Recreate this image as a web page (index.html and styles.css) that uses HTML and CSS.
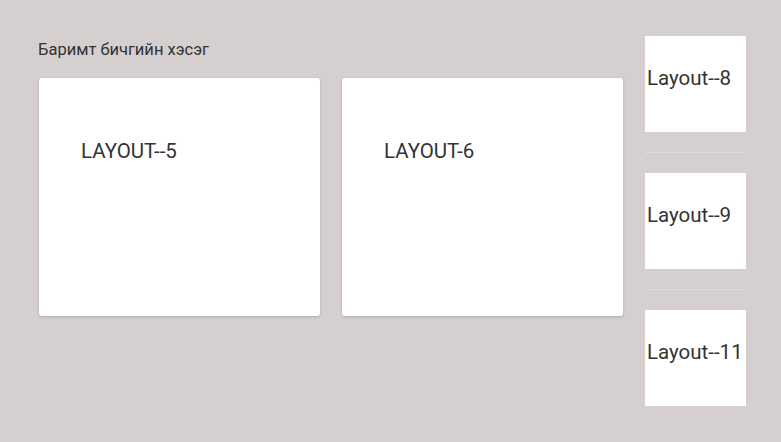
FILE: index.html
```html
<html lang="mn">
<head>
    <meta charset="UTF-8">
    <meta name="viewport" content="width=device-width, initial-scale=1.0">
    <title>Layout</title>
    <link rel="stylesheet" href="styles.css">
</head>
<body>

    <div class="page">
        <div class="docs">
            <h2 class="docs-title">Баримт бичгийн хэсэг</h2>
            <div class="cards">
                <div class="card">LAYOUT--5</div>
                <div class="card">LAYOUT-6</div>
            </div>
        </div>

        <div class="side">
            <div class="side-box">Layout--8</div>
            <hr class="side-line">
            <div class="side-box">Layout--9</div>
            <hr class="side-line">
            <div class="side-box">Layout--11</div>
        </div>
    </div>

</body>
</html>
```

FILE: styles.css
```css
body {
    margin: 0;
    background-color: #d5d0cf;
    font-family: Roboto, "Noto Sans", sans-serif;
    color: #333333;
}

.page {
    display: flex;
    padding: 36px 0 0 39px;
}

.docs {
    width: 584px;
}

.docs-title {
    font-size: 16.5px;
    font-weight: 400;
    line-height: 18px;
    margin: 5px 0 19px -1px;
    color: #333;
}

.cards {
    display: flex;
    gap: 22px;
}

.card {
    width: 281px;
    height: 238px;
    box-sizing: border-box;
    padding: 62px 42px;
    background-color: white;
    border-radius: 3px;
    box-shadow: 0 1px 3px rgba(0, 0, 0, 0.18);
    font-size: 20.5px;
    line-height: 23px;
}

.side {
    margin-left: 22px;
    width: 101px;
}

.side-box {
    height: 96px;
    box-sizing: border-box;
    padding: 31px 0 0 2px;
    background-color: white;
    font-size: 20.5px;
    line-height: 23px;
    white-space: nowrap;
}

.side-line {
    margin: 20px 0;
    border: none;
    height: 1px;
    background-color: #dfdbda;
}
```
